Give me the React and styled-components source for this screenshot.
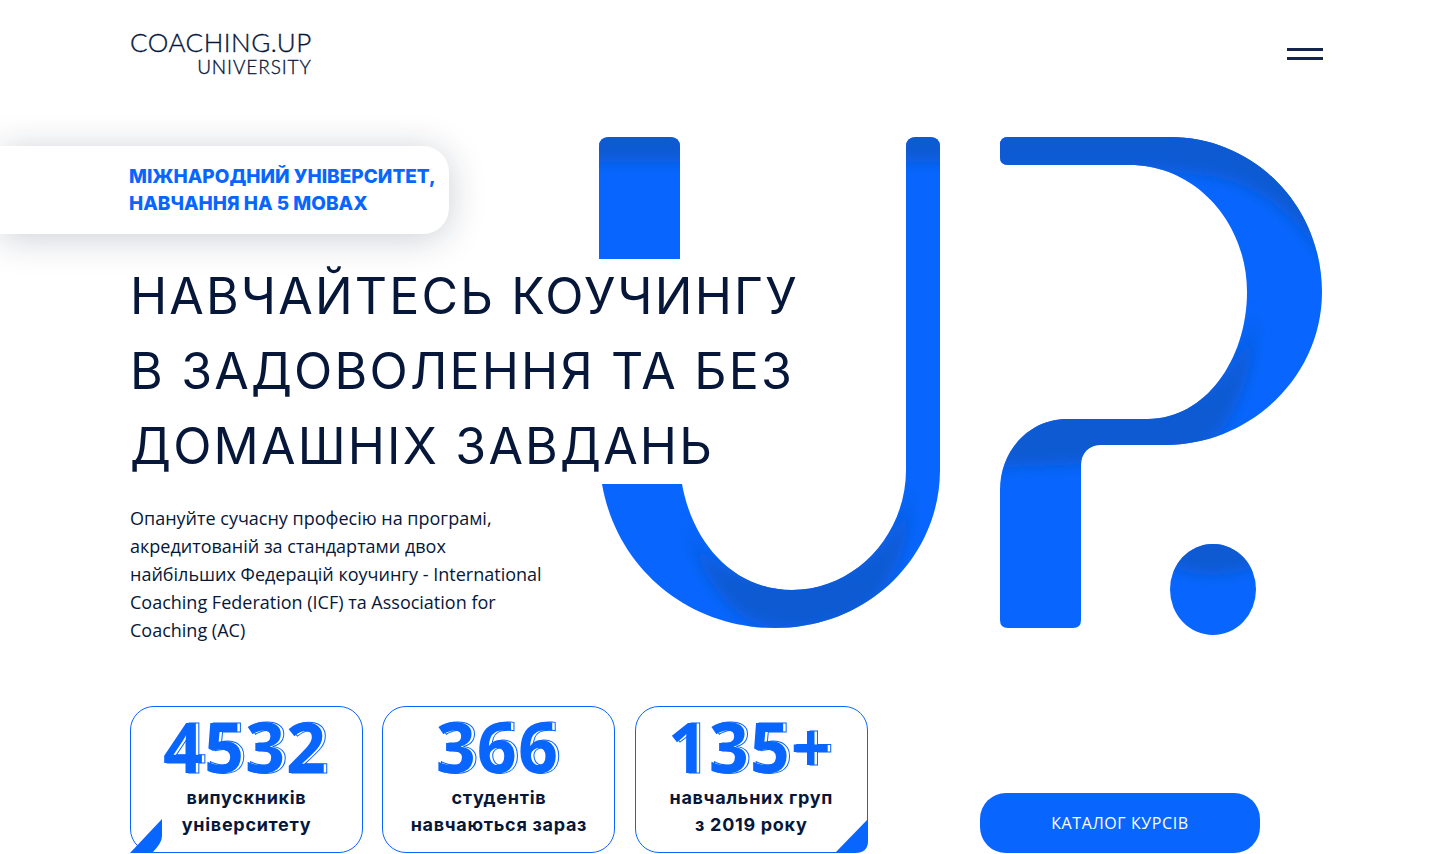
import React from "react";
import styled, { createGlobalStyle } from "styled-components";

const Global = createGlobalStyle`
  html, body { margin: 0; padding: 0; background: #fff; }
  body { font-family: "Open Sans", sans-serif; overflow: hidden; }
`;

const BLUE = "#0866ff";
const SHADE = "#0a5ad2";
const NAVY = "#06173a";

const Page = styled.div`
  position: relative;
  width: 1440px;
  height: 854px;
  overflow: hidden;
  background: #fff;
`;
const Art = styled.svg`
  position: absolute;
  left: 0;
  top: 0;
  width: 1440px;
  height: 854px;
  pointer-events: none;
`;
const Header = styled.header`
  position: relative;
  display: flex;
  justify-content: space-between;
  align-items: center;
  height: 108px;
  padding: 0 117px 0 130px;
`;
const Logo = styled.div`
  display: flex;
  flex-direction: column;
  align-items: flex-end;
  font-family: "Lato", sans-serif;
  font-weight: 300;
  color: ${NAVY};
  -webkit-text-stroke: 0.35px ${NAVY};
`;
const LogoMain = styled.span`
  font-size: 26px;
  line-height: 28px;
  letter-spacing: 0.5px;
  margin-top: -2px;
`;
const LogoSub = styled.span`
  font-size: 19px;
  line-height: 22px;
  letter-spacing: 0.9px;
`;
const Burger = styled.button`
  display: flex;
  flex-direction: column;
  gap: 6px;
  width: 36px;
  padding: 0;
  border: 0;
  background: none;
`;
const BurgerLine = styled.span`
  display: block;
  height: 3px;
  background: #14244c;
`;
const Pill = styled.div`
  position: relative;
  box-sizing: border-box;
  width: 449px;
  height: 88px;
  margin-top: 38px;
  padding: 17px 0 0 129px;
  background: #fff;
  border-radius: 0 26px 26px 0;
  box-shadow: 0 4px 36px rgba(20, 30, 60, 0.22);
  color: ${BLUE};
  font-family: "Inter", sans-serif;
  font-weight: 800;
  font-size: 19px;
  line-height: 27px;
`;
const Heading = styled.h1`
  position: relative;
  margin: 25px 0 0 130px;
  font-family: "Inter", sans-serif;
  font-weight: 400;
  font-size: 50px;
  line-height: 75px;
  letter-spacing: 2.2px;
  color: ${NAVY};
  white-space: nowrap;
`;
const Intro = styled.p`
  position: relative;
  width: 440px;
  margin: 20px 0 0 130px;
  font-size: 18px;
  line-height: 28px;
  color: ${NAVY};
`;
const Bottom = styled.div`
  position: absolute;
  left: 130px;
  right: 180px;
  top: 706px;
  display: flex;
  align-items: flex-end;
`;
const Stats = styled.div`
  display: flex;
  gap: 19.4px;
`;
const Card = styled.div`
  position: relative;
  box-sizing: border-box;
  width: 233px;
  height: 147px;
  border: 1px solid ${BLUE};
  border-radius: 24px;
  text-align: center;
`;
const Num = styled.div`
  position: relative;
  isolation: isolate;
  margin: 2px 0 0 -3px;
  font-weight: 700;
  font-size: 70px;
  line-height: 75px;
  letter-spacing: 1px;
  color: ${BLUE};
  &::after {
    content: attr(data-text);
    position: absolute;
    left: 0;
    right: 0;
    top: 0;
    transform: translateX(3px);
    z-index: -1;
    color: #fff;
    -webkit-text-stroke: 1px ${BLUE};
  }
`;
const Label = styled.div`
  font-family: "Inter", sans-serif;
  font-weight: 700;
  font-size: 18px;
  line-height: 27px;
  letter-spacing: 0.7px;
  color: ${NAVY};
`;
const Corner = styled.svg`
  position: absolute;
  bottom: -1px;
  ${(p) => (p.$side === "left" ? "left: -1px;" : "right: -1px;")}
  width: 33px;
  height: 34px;
`;
const Cta = styled.button`
  margin-left: auto;
  width: 280px;
  height: 60px;
  border: 0;
  border-radius: 26px;
  background: ${BLUE};
  color: #fff;
  font-family: "Open Sans", sans-serif;
  font-size: 16px;
  letter-spacing: 0.6px;
`;

const U1 = "M599 259 L599 147 Q599 137 609 137 L670 137 Q680 137 680 147 L680 259 Z";
const U2 = "M602 484 C617 570 690 628 775 628 C870 628 940 555 940 470 L940 147 Q940 137 930 137 L916 137 Q906 137 906 147 L906 470 C906 535 855 590 792 590 C735 590 693 545 682 484 Z";
const P = "M1008 137 L1170 137 C1255 137 1322 207 1322 292 C1322 377 1250 445 1165 445 L1100 445 C1089 445 1081 453 1081 465 L1081 620 Q1081 628 1073 628 L1008 628 Q1000 628 1000 620 L1000 490 C1000 450 1030 419 1067 419 L1148 419 C1205 419 1247 360 1247 292 C1247 222 1195 165 1130 165 L1008 165 Q1000 165 1000 157 L1000 145 Q1000 137 1008 137 Z";

const stats = [
  { n: "4532", a: "випускників", b: "університету", corner: "left" },
  { n: "366", a: "студентів", b: "навчаються зараз" },
  { n: "135+", a: "навчальних груп", b: "з 2019 року", corner: "right" },
];

export default function App() {
  return (
    <Page>
      <Global />
      <Art viewBox="0 0 1440 854">
        <defs>
          <filter id="w" x="500" y="50" width="900" height="700" filterUnits="userSpaceOnUse">
            <feGaussianBlur stdDeviation="8" />
          </filter>
          <clipPath id="cu1"><path d={U1} /></clipPath>
          <clipPath id="cu2"><path d={U2} /></clipPath>
          <clipPath id="cp"><path d={P} /></clipPath>
          <clipPath id="cd"><ellipse cx="1213" cy="589.5" rx="43" ry="45.5" /></clipPath>
        </defs>
        <path d={U1} fill={BLUE} />
        <path d={U2} fill={BLUE} />
        <path d={P} fill={BLUE} />
        <ellipse cx="1213" cy="589.5" rx="43" ry="45.5" fill={BLUE} />
        <g clipPath="url(#cu1)"><rect x="570" y="100" width="140" height="62" fill={SHADE} filter="url(#w)" /></g>
        <g clipPath="url(#cu2)">
          <rect x="880" y="100" width="90" height="62" fill={SHADE} filter="url(#w)" />
          <path d="M676 500 C694 570 745 578 792 578 C860 578 905 535 912 480 C912 540 895 595 855 618 C810 635 770 635 740 615 C710 590 690 550 676 500 Z" fill={SHADE} filter="url(#w)" />
        </g>
        <g clipPath="url(#cp)" filter="url(#w)" fill={SHADE}>
          <path d="M985 120 L1170 120 C1250 120 1320 170 1340 290 C1305 215 1255 180 1200 175 L1170 172 L985 172 Z" />
          <path d="M985 480 C990 430 1040 405 1090 405 L1150 405 C1205 405 1250 360 1256 305 C1258 370 1232 435 1192 460 L985 468 Z" />
        </g>
        <g clipPath="url(#cd)"><ellipse cx="1213" cy="545" rx="60" ry="30" fill={SHADE} filter="url(#w)" /></g>
      </Art>
      <Header>
        <Logo>
          <LogoMain>COACHING.UP</LogoMain>
          <LogoSub>UNIVERSITY</LogoSub>
        </Logo>
        <Burger aria-label="menu">
          <BurgerLine />
          <BurgerLine />
        </Burger>
      </Header>
      <Pill>
        МІЖНАРОДНИЙ УНІВЕРСИТЕТ,
        <br />
        НАВЧАННЯ НА 5 МОВАХ
      </Pill>
      <Heading>
        НАВЧАЙТЕСЬ КОУЧИНГУ
        <br />
        В ЗАДОВОЛЕННЯ ТА БЕЗ
        <br />
        ДОМАШНІХ ЗАВДАНЬ
      </Heading>
      <Intro>
        Опануйте сучасну професію на програмі,
        <br />
        акредитованій за стандартами двох
        <br />
        найбільших Федерацій коучингу - International
        <br />
        Coaching Federation (ICF) та Association for
        <br />
        Coaching (AC)
      </Intro>
      <Bottom>
        <Stats>
          {stats.map((s) => (
            <Card key={s.n}>
              <Num data-text={s.n}>{s.n}</Num>
              <Label>{s.a}</Label>
              <Label>{s.b}</Label>
              {s.corner === "left" && (
                <Corner $side="left" viewBox="0 0 33 34">
                  <path d="M32 0 L32 17 Q32 24 22 34 L0 34 Z" fill={BLUE} />
                </Corner>
              )}
              {s.corner === "right" && (
                <Corner $side="right" viewBox="0 0 33 34">
                  <path d="M33 0 L33 22 Q33 34 20 34 L0 34 Z" fill={BLUE} />
                </Corner>
              )}
            </Card>
          ))}
        </Stats>
        <Cta>КАТАЛОГ КУРСІВ</Cta>
      </Bottom>
    </Page>
  );
}
